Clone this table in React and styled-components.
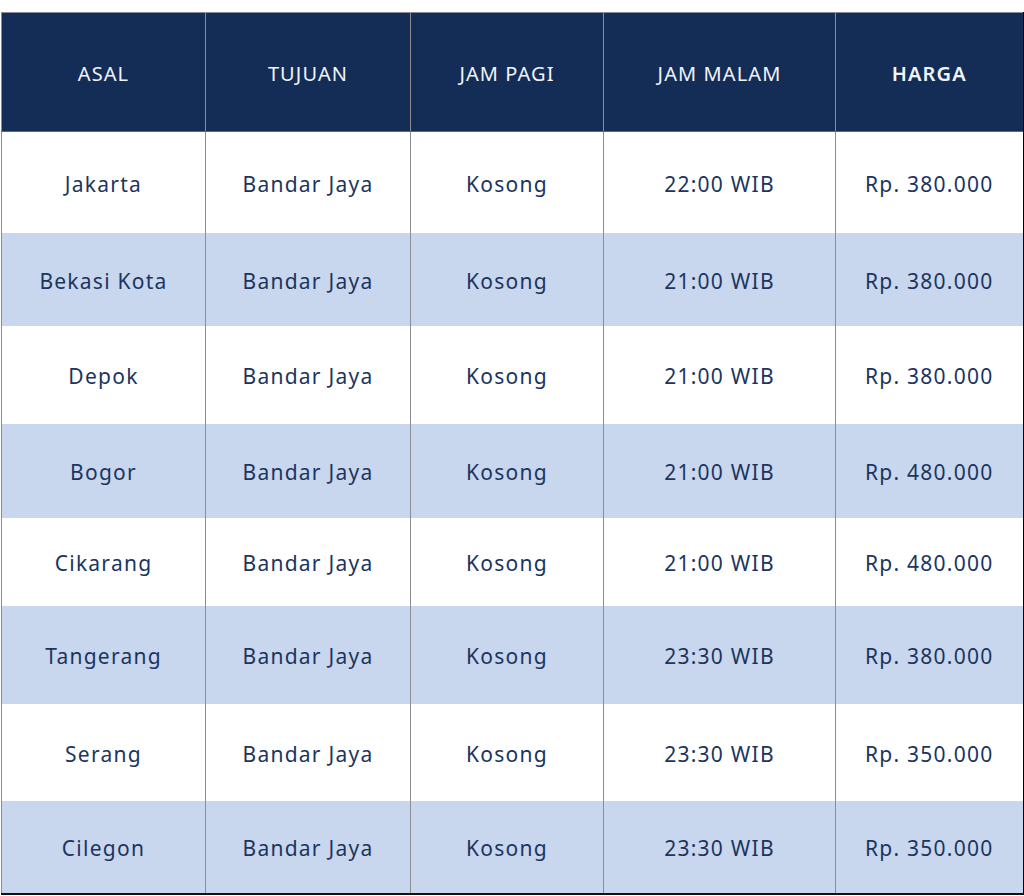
import React from "react";
import styled, { createGlobalStyle } from "styled-components";

const GlobalStyle = createGlobalStyle`
body{
  margin: 0;
  background: #ffffff;
  font-family: "Noto Sans", "Open Sans", sans-serif;
}
`;

const Wrap = styled.div`
padding: 12px 0 0 1px;
width: 1023px;
box-sizing: border-box;
`;

const Table = styled.table`
width: 1022px;
table-layout: fixed;
border-collapse: collapse;
border-top: 1px solid #8a8d93;
border-left: 1px solid #8a8d93;
border-right: 2px solid #000000;
border-bottom: 2px solid #111111;
`;

const HeadCell = styled.th`
background: #142d56;
color: #f2f4f8;
font-size: 20px;
font-weight: ${({ $bold }) => ($bold ? 600 : 400)};
letter-spacing: 1.1px;
text-align: center;
height: 115px;
padding: 3px 0 0;
border-left: 1px solid #8a8d93;
border-bottom: 1px solid #5a6680;
&:first-child{
  border-left: none;
}
`;

const Row = styled.tr`
background: ${({ $alt }) => ($alt ? "#c9d7ee" : "#ffffff")};
height: ${({ $h }) => $h}px;
`;

const Cell = styled.td`
color: #1b355f;
font-size: 21px;
letter-spacing: 1.25px;
text-align: center;
padding: 3px 0 0;
border-left: 1px solid #8a8d93;
&:first-child{
  border-left: none;
}
`;

const cols = [204, 205, 193, 232, 188];

const rows = [
  ["Jakarta", "22:00 WIB", "Rp. 380.000", 101],
  ["Bekasi Kota", "21:00 WIB", "Rp. 380.000", 93],
  ["Depok", "21:00 WIB", "Rp. 380.000", 98],
  ["Bogor", "21:00 WIB", "Rp. 480.000", 94],
  ["Cikarang", "21:00 WIB", "Rp. 480.000", 88],
  ["Tangerang", "23:30 WIB", "Rp. 380.000", 98],
  ["Serang", "23:30 WIB", "Rp. 350.000", 97],
  ["Cilegon", "23:30 WIB", "Rp. 350.000", 93],
];

const App = () => {
  return (
    <Wrap>
      <GlobalStyle />
      <Table>
        <colgroup>
          {cols.map((w, i) => (
            <col key={i} style={{ width: w }} />
          ))}
        </colgroup>
        <thead>
          <tr>
            <HeadCell>ASAL</HeadCell>
            <HeadCell>TUJUAN</HeadCell>
            <HeadCell>JAM PAGI</HeadCell>
            <HeadCell>JAM MALAM</HeadCell>
            <HeadCell $bold>HARGA</HeadCell>
          </tr>
        </thead>
        <tbody>
          {rows.map(([asal, malam, harga, h], i) => (
            <Row key={asal} $alt={i % 2 === 1} $h={h}>
              <Cell>{asal}</Cell>
              <Cell>Bandar Jaya</Cell>
              <Cell>Kosong</Cell>
              <Cell>{malam}</Cell>
              <Cell>{harga}</Cell>
            </Row>
          ))}
        </tbody>
      </Table>
    </Wrap>
  );
};

export default App;
